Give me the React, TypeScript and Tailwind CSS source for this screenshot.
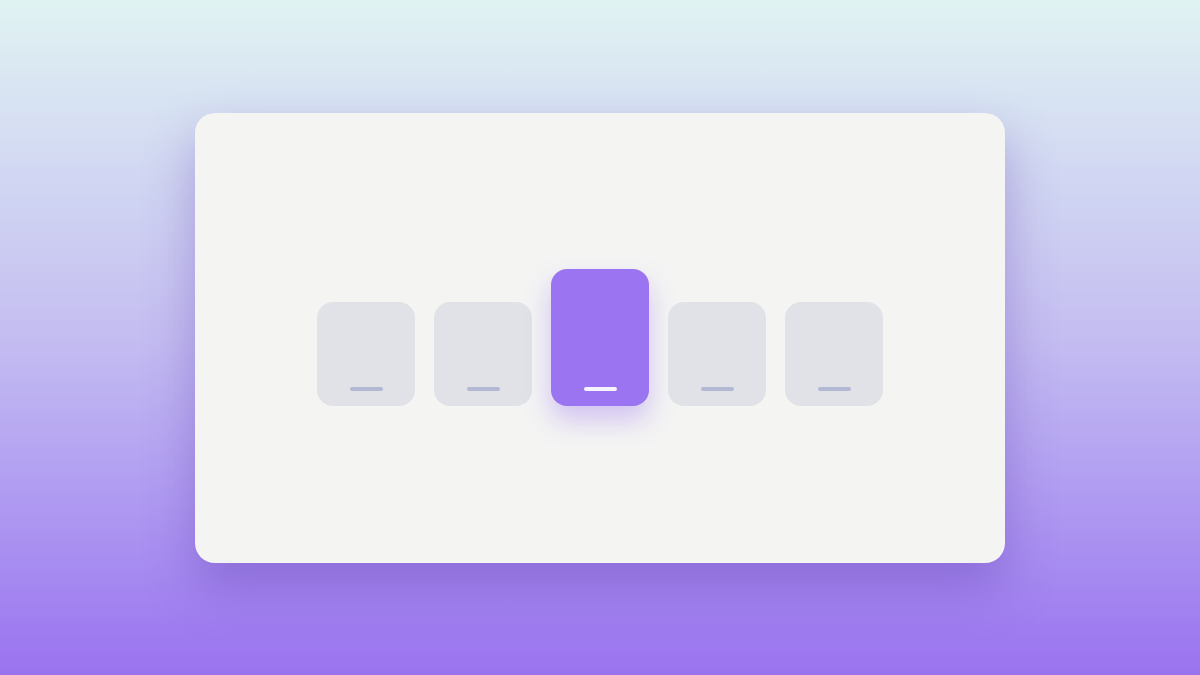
const tiles = [false, false, true, false, false];

export default function App() {
  return (
    <div className="w-[1200px] h-[675px] flex items-center justify-center bg-gradient-to-b from-[#e0f3f2] via-[#c4bdf1] to-[#9a72ef]">
      {/* Card */}
      <div className="w-[810px] h-[450px] rounded-[20px] bg-[#f4f4f3] shadow-[0_24px_50px_rgba(88,52,170,0.35)] flex items-center justify-center">
        <div className="flex items-end gap-[19px]">
          {tiles.map((active, i) =>
            active ? (
              <div
                key={i}
                className="w-[98px] h-[137px] rounded-[16px] bg-[#9b74f1] shadow-[0_14px_26px_rgba(155,116,241,0.38)] flex flex-col justify-end items-center pb-[15px]"
              >
                <div className="w-[33px] h-[4px] rounded-full bg-[#f7f3ff]" />
              </div>
            ) : (
              <div
                key={i}
                className="w-[98px] h-[104px] rounded-[16px] bg-[#e1e2e7] flex flex-col justify-end items-center pb-[15px]"
              >
                <div className="w-[33px] h-[4px] rounded-full bg-[#b3b8d3]" />
              </div>
            )
          )}
        </div>
      </div>
    </div>
  );
}
